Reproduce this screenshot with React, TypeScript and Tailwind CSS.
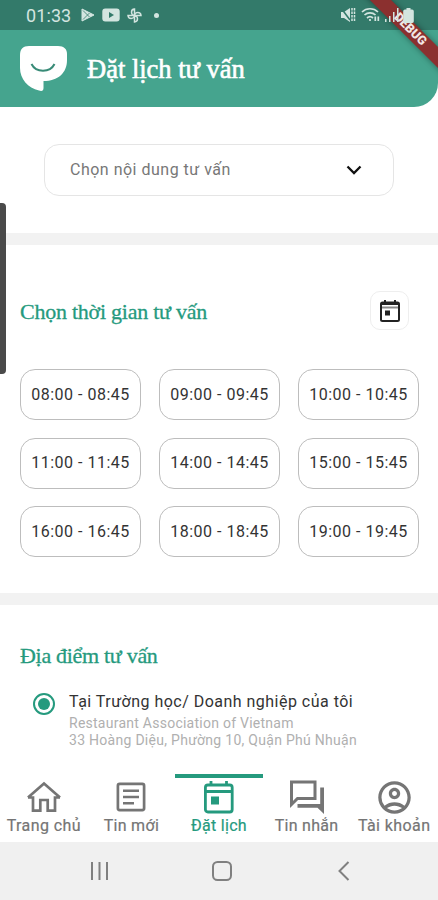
import React, { useState } from 'react';
import { MdOutlineAccountCircle } from 'react-icons/md';

const slots = [
  '08:00 - 08:45',
  '09:00 - 09:45',
  '10:00 - 10:45',
  '11:00 - 11:45',
  '14:00 - 14:45',
  '15:00 - 15:45',
  '16:00 - 16:45',
  '18:00 - 18:45',
  '19:00 - 19:45'
];

function CalendarIcon() {
  return (
    <svg width="22" height="24" viewBox="0 0 22 24" fill="none" stroke="currentColor" strokeWidth="2">
      <rect x="2" y="3.500" width="18" height="18.500" rx="1.500" />
      <path d="M2 5h18M6 1v3M16 1v3" />
      <path d="M3 8.500h16" stroke="#888" />
      <rect x="6" y="11.500" width="5" height="5" fill="currentColor" stroke="none" />
    </svg>
  );
}

function BookingIcon() {
  return (
    <svg width="32" height="34" viewBox="0 0 32 34" fill="none" stroke="currentColor" strokeWidth="2.800">
      <rect x="2.400" y="5" width="26.800" height="27" rx="2.500" />
      <path d="M2.400 11.500h26.800M8 1v4M23.500 1v4" />
      <rect x="8" y="16.500" width="8" height="8" fill="currentColor" stroke="none" />
    </svg>
  );
}

function HomeIcon() {
  return (
    <svg width="36" height="32" viewBox="0 0 36 32" fill="none" stroke="currentColor" strokeWidth="2.700">
      <path d="M2 16.500 18 2.600 34 16.500M2 16.500H7V29.600H14.300V19H21.700V29.600H29V16.500H34" />
    </svg>
  );
}

function NewsIcon() {
  return (
    <svg width="30" height="30" viewBox="0 0 30 30" fill="none" stroke="currentColor" strokeWidth="2.700">
      <rect x="1.900" y="1.900" width="26.200" height="26.200" rx="1.800" />
      <path d="M7 8.700h16M7 15h16M7 21.300h11" strokeWidth="2.500" />
    </svg>
  );
}

function ChatIcon() {
  return (
    <svg width="36" height="34" viewBox="0 0 36 34" fill="none" stroke="currentColor" strokeWidth="3">
      <path d="M2.500 2h23.500v16.500H8.500L2.500 24.500z" />
      <path d="M31.200 7.500H35V34L28.500 27.800H8.500V24H31.200z" fill="currentColor" stroke="none" />
    </svg>
  );
}

function StatusBar() {
  return (
    <div className="h-[30px] bg-[#337a6a] flex items-center pl-[26px] pr-[24px] text-[#d3e5e0]">
      <span className="text-[18px] w-[47px] tracking-[0.1px] whitespace-nowrap">01:33</span>
      <svg className="ml-[8px]" width="14" height="14" viewBox="0 0 14 14" fill="none" stroke="currentColor">
        <path d="M1 1v12L13 7z" fill="currentColor" />
        <path d="M2 2.500 8.500 9M2 11.500 8.500 5" stroke="#337a6a" strokeWidth="0.8" />
      </svg>
      <svg className="ml-[7px]" width="18" height="14" viewBox="0 0 18 14">
        <rect x="0.300" y="0.500" width="17.400" height="13" rx="3" fill="currentColor" />
        <path d="M7 4v6l5-3z" fill="#337a6a" />
      </svg>
      <svg className="ml-[7px]" width="15" height="15" viewBox="0 0 15 15" fill="none" stroke="currentColor" strokeWidth="1.500">
        <path d="M7.500 7.500V1A3.200 3.200 0 0 0 4.500 4.200C4.500 6 6 7.500 7.500 7.500H14A3.200 3.200 0 0 0 10.800 4.500C9 4.500 7.500 6 7.500 7.500V14A3.200 3.200 0 0 0 10.500 10.800C10.500 9 9 7.500 7.500 7.500H1A3.200 3.200 0 0 0 4.200 10.500C6 10.500 7.500 9 7.500 7.500" />
      </svg>
      <span className="ml-[12px] size-[5px] rounded-full bg-[#d3e5e0]" />

      <div className="relative z-10 ml-auto flex items-center">
        <svg width="16" height="16" viewBox="0 0 16 16" fill="none" stroke="currentColor" strokeWidth="1.500">
          <path d="M1 5h3l6-4v14L4 11H1z" fill="currentColor" stroke="none" />
          <path d="m1 1 9 12" stroke="#337a6a" />
          <path d="M12 1v14M14.500 1v14" strokeDasharray="2.500 1" />
        </svg>
        <svg className="ml-[5px]" width="20" height="16" viewBox="0 0 20 16" fill="none" stroke="currentColor" strokeWidth="1.700">
          <path d="M1 5a11.500 11.500 0 0 1 16 0M3.500 8a8 8 0 0 1 11 0M6 11a4.500 4.500 0 0 1 6 0" />
          <path d="M9 12v2M14.300 9.500v4.500M17.300 9.500v4.500" />
        </svg>
        <svg className="ml-[4px]" width="16" height="14" viewBox="0 0 16 14" fill="currentColor">
          <path d="M0 11h1.500v3H0zM4 8h1.500v6H4zM8 4h1.500v10H8zM12 0h1.500v14H12z" />
        </svg>
        <svg className="ml-[2px]" width="11" height="15" viewBox="0 0 11 15" fill="currentColor">
          <path d="M3.500 0h4v1.500H9A1.800 1.800 0 0 1 10.800 3.300v10A1.700 1.700 0 0 1 9 15H2a1.700 1.700 0 0 1-1.800-1.700v-10A1.800 1.800 0 0 1 2 1.500h1.500z" />
        </svg>
      </div>
    </div>
  );
}

function Header() {
  return (
    <header className="h-[77px] bg-[#45a48e] rounded-br-[24px] flex items-center pl-[20px]">
      <svg className="shrink-0" width="47" height="45" viewBox="0 0 47 45">
        <path d="M9 0H38C44 0 47 3 47 8V14C47 27 38 35 23.500 35V42C23.500 44.500 22 45.500 19 44.500C8 42 0 33 0 22V9C0 3 3 0 9 0Z" fill="#fff" />
        <path d="M11.500 18C16 27 30 27 34.500 18" fill="none" stroke="#388b77" strokeWidth="2" />
      </svg>
      <h1 className="ml-[20px] mt-[3px] font-['Liberation_Serif',serif] text-[26.500px] text-white whitespace-nowrap [-webkit-text-stroke:0.6px_white]">
        Đặt lịch tư vấn
      </h1>
    </header>
  );
}

function NavItem({ label, children, active = false, className = '' }: {
  label: string;
  children: React.ReactNode;
  active?: boolean;
  className?: string;
}) {
  return (
    <button className={`flex-1 min-w-0 flex flex-col items-center border-t-4 ${active ? 'border-[#259a7e] text-[#259a7e]' : 'border-transparent text-[#757575]'}`}>
      <span className="h-[38px] flex items-center">{children}</span>
      <span className={`text-[16px] leading-[20px] whitespace-nowrap [-webkit-text-stroke:0.2px_currentColor] ${className}`}>{label}</span>
    </button>
  );
}

function App() {
  const [selected, setSelected] = useState<string | null>(null);

  return (
    <div className="relative w-[438px] h-[900px] overflow-hidden bg-white font-[Roboto,sans-serif] flex flex-col">
      <StatusBar />
      <Header />

      <section className="h-[126px] pt-[37px] px-[44px]">
        <button className="w-[350px] h-[52px] rounded-[15px] border border-[#e5e5e5] flex items-center justify-between pl-[25px] pr-[31px]">
          <span className="text-[16px] tracking-[0.500px] text-[#777]">Chọn nội dung tư vấn</span>
          <svg width="16" height="10" viewBox="0 0 16 10" fill="none" stroke="#111" strokeWidth="2.300">
            <path d="m1.500 1.500 6.500 6.500 6.500-6.500" />
          </svg>
        </button>
      </section>

      <div className="h-[12px] bg-[#f2f2f2]" />

      <section className="h-[348px] px-[20px] pt-[46px]">
        <div className="flex items-center justify-between pr-[9px]">
          <h2 className="mt-[3px] font-['Liberation_Serif',serif] text-[22px] leading-[28px] tracking-[-0.250px] text-[#259a7e] [-webkit-text-stroke:0.3px_currentColor]">Chọn thời gian tư vấn</h2>
          <button className="size-[39px] rounded-[10px] border border-[#eee] flex items-center justify-center text-[#222]">
            <CalendarIcon />
          </button>
        </div>
        <div className="mt-[39px] grid grid-cols-3 w-[399px] gap-x-[18px] gap-y-[17.500px]">
          {slots.map(slot => (
            <button
              key={slot}
              onClick={() => setSelected(slot)}
              className={`h-[51px] rounded-[15px] border text-[16px] tracking-[0.500px] text-[#333] whitespace-nowrap ${selected === slot ? 'border-[#259a7e]' : 'border-[#bdbdbd]'}`}
            >
              {slot}
            </button>
          ))}
        </div>
      </section>

      <div className="h-[12px] bg-[#f2f2f2]" />

      <section className="h-[169px] px-[20px] pt-[37px]">
        <h2 className="font-['Liberation_Serif',serif] text-[22px] leading-[28px] tracking-[-0.300px] text-[#259a7e] [-webkit-text-stroke:0.3px_currentColor]">Địa điểm tư vấn</h2>
        <div className="mt-[21px] pl-[13px] flex items-start">
          <span className="mt-[2px] size-[22px] shrink-0 rounded-full border-2 border-[#259a7e] flex items-center justify-center">
            <span className="size-[12px] rounded-full bg-[#259a7e]" />
          </span>
          <div className="ml-[14px] whitespace-nowrap">
            <p className="text-[16px] leading-[22px] tracking-[0.480px] text-[#333]">Tại Trường học/ Doanh nghiệp của tôi</p>
            <p className="mt-[2px] text-[14px] leading-[17px] tracking-[0.250px] text-[#b0b0b0]">Restaurant Association of Vietnam</p>
            <p className="text-[14px] leading-[17px] tracking-[0.280px] text-[#b0b0b0]">33 Hoàng Diệu, Phường 10, Quận Phú Nhuận</p>
          </div>
        </div>
      </section>

      <nav className="h-[68px] shrink-0 bg-white flex">
        <NavItem label="Trang chủ" className="tracking-[0.400px]"><HomeIcon /></NavItem>
        <NavItem label="Tin mới" className="tracking-[0.300px]"><NewsIcon /></NavItem>
        <NavItem label="Đặt lịch" className="tracking-[0.300px]" active><BookingIcon /></NavItem>
        <NavItem label="Tin nhắn" className="tracking-[0.300px]"><ChatIcon /></NavItem>
        <NavItem label="Tài khoản" className="tracking-[0.400px]"><MdOutlineAccountCircle size={39} /></NavItem>
      </nav>

      <div className="h-[58px] shrink-0 bg-[#f0f0f0]">
        <svg width="438" height="58" viewBox="0 0 438 58" fill="none" stroke="#808080" strokeWidth="2">
          <path d="M92 20v18M99.500 20v18M107 20v18" />
          <rect x="213" y="20" width="18" height="18" rx="4.500" />
          <path d="m348.500 20-9 9 9 9" />
        </svg>
      </div>

      {/* edge panel handle */}
      <div className="absolute left-0 top-[203px] w-[6px] h-[171px] rounded-r-[4px] bg-[#4a4a4a]" />

      {/* debug ribbon */}
      <div className="absolute left-[345px] top-[22px] w-[130px] h-[15px] rotate-45 bg-[#8b302f] shadow-[0_0_6px_rgba(0,0,0,0.4)] flex items-center justify-center text-[12.500px] font-black text-[#f3e6e5]">
        DEBUG
      </div>
    </div>
  );
}

export default App;
